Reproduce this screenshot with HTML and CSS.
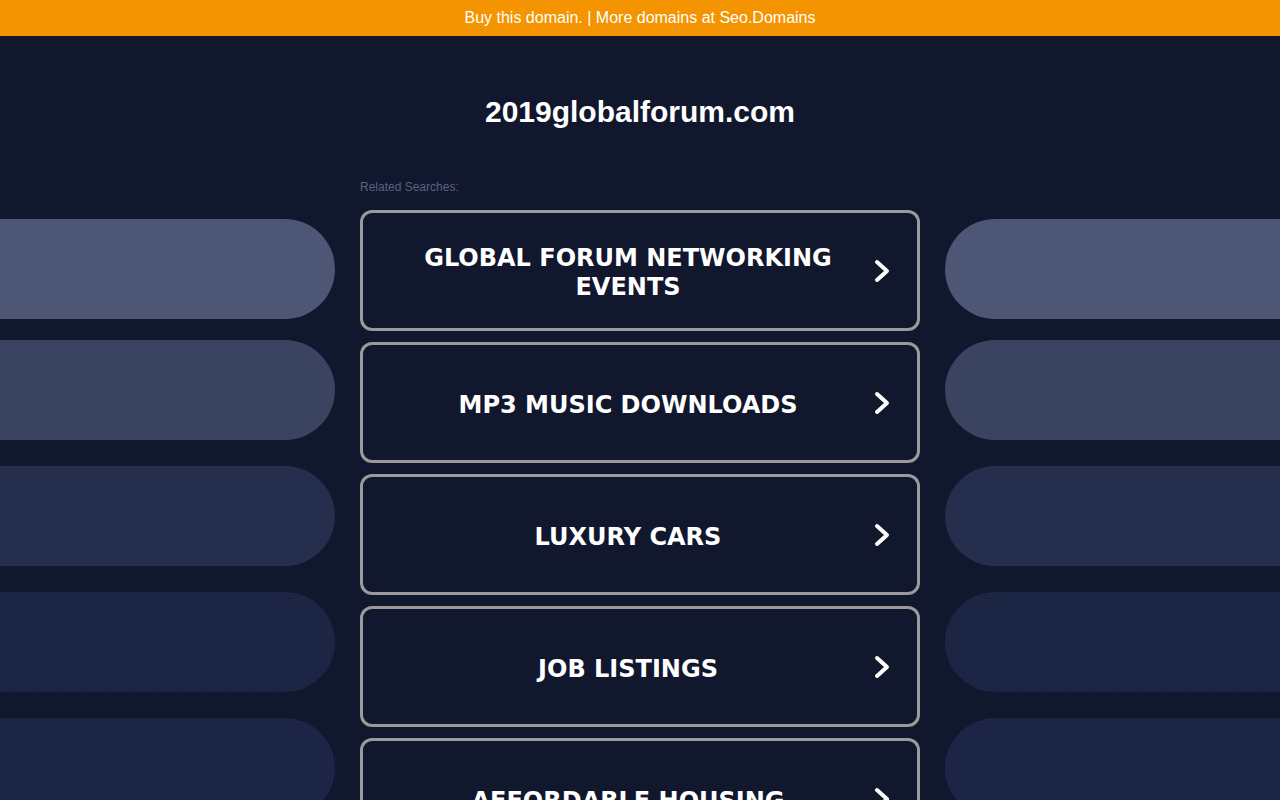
FILE: index.html
```html
<!DOCTYPE html>
<html lang="en">
<head>
<meta charset="utf-8">
<title>2019globalforum.com</title>
<link rel="stylesheet" href="styles.css">
</head>
<body>
<div class="topbar"><a class="toplink" href="#">Buy this domain.</a> | <a class="toplink" href="#">More domains at Seo.Domains</a></div>
<header class="header"><h1 class="title">2019globalforum.com</h1></header>
<main class="layout">
  <div class="side side-left">
    <div class="pill pill-1"></div>
    <div class="pill pill-2"></div>
    <div class="pill pill-3"></div>
    <div class="pill pill-4"></div>
    <div class="pill pill-5"></div>
  </div>
  <div class="center">
    <div class="related">Related Searches:</div>
    <ul class="links">
      <li><a class="link" href="#"><span class="link-text">GLOBAL FORUM NETWORKING EVENTS</span><svg class="chev" viewBox="0 0 18 26" width="18" height="26"><polyline points="4,4 14,13 4,22"/></svg></a></li>
      <li><a class="link" href="#"><span class="link-text">MP3 MUSIC DOWNLOADS</span><svg class="chev" viewBox="0 0 18 26" width="18" height="26"><polyline points="4,4 14,13 4,22"/></svg></a></li>
      <li><a class="link" href="#"><span class="link-text">LUXURY CARS</span><svg class="chev" viewBox="0 0 18 26" width="18" height="26"><polyline points="4,4 14,13 4,22"/></svg></a></li>
      <li><a class="link" href="#"><span class="link-text">JOB LISTINGS</span><svg class="chev" viewBox="0 0 18 26" width="18" height="26"><polyline points="4,4 14,13 4,22"/></svg></a></li>
      <li><a class="link" href="#"><span class="link-text">AFFORDABLE HOUSING</span><svg class="chev" viewBox="0 0 18 26" width="18" height="26"><polyline points="4,4 14,13 4,22"/></svg></a></li>
    </ul>
  </div>
  <div class="side side-right">
    <div class="pill pill-1"></div>
    <div class="pill pill-2"></div>
    <div class="pill pill-3"></div>
    <div class="pill pill-4"></div>
    <div class="pill pill-5"></div>
  </div>
</main>
</body>
</html>
```
FILE: styles.css
```css
html, body {
  margin: 0;
  padding: 0;
}
body {
  background: #11172d;
  font-family: "Liberation Sans", Arial, sans-serif;
  color: #fff;
  height: 800px;
  overflow: hidden;
}
.topbar {
  height: 36px;
  line-height: 35px;
  background: #f39400;
  text-align: center;
  font-size: 16px;
  color: #fff;
}
.toplink {
  color: #fff;
  text-decoration: none;
}
.header {
  padding: 59px 0 49px;
  text-align: center;
}
.title {
  margin: 0;
  font-size: 30px;
  line-height: 34px;
  font-weight: bold;
  color: #fff;
}
.layout {
  display: grid;
  grid-template-columns: 335px 560px 335px;
  column-gap: 25px;
}
.side {
  display: flex;
  flex-direction: column;
  padding-top: 41px;
}
.pill {
  height: 100px;
  margin-bottom: 26px;
}
.pill-1 { margin-bottom: 21px; background: #4d5775; }
.pill-2 { background: #3a4360; }
.pill-3 { background: #252e4d; }
.pill-4 {
  background-color: #1c2443;
  background-image: radial-gradient(rgba(70, 82, 120, 0.15) 0.6px, transparent 0.8px);
  background-size: 3px 3px;
}
.pill-5 {
  background-color: #1b2445;
  background-image: radial-gradient(rgba(70, 82, 120, 0.2) 0.6px, transparent 0.8px);
  background-size: 3px 3px;
}
.side-left .pill { border-radius: 0 50px 50px 0; }
.side-right .pill { border-radius: 50px 0 0 50px; }
.related {
  font-size: 12px;
  line-height: 14px;
  color: #5a6382;
  padding-top: 2px;
  margin-bottom: 16px;
}
.links {
  list-style: none;
  margin: 0;
  padding: 0;
}
.links li {
  margin-bottom: 11px;
}
.link {
  box-sizing: border-box;
  height: 121px;
  border: 3px solid #9a9a9a;
  border-radius: 12px;
  display: flex;
  align-items: center;
  padding: 0 26px 0 20px;
  text-decoration: none;
  color: #fff;
  background: #11172d;
}
.link-text {
  flex: 1;
  text-align: center;
  font-family: "DejaVu Sans", Verdana, sans-serif;
  font-weight: bold;
  font-size: 24px;
  line-height: 29px;
  padding-top: 5px;
}
.chev {
  flex: none;
  fill: none;
  stroke: #fff;
  stroke-width: 4;
  stroke-linecap: round;
  stroke-linejoin: round;
}
```
